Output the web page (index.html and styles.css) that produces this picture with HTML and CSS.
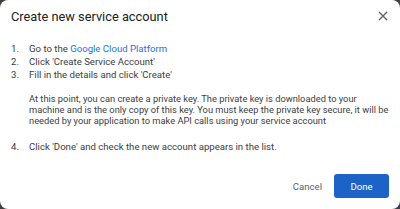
FILE: index.html
```html
<!DOCTYPE html>
<html>
<head>
<meta charset="utf-8">
<link rel="stylesheet" href="styles.css">
</head>
<body>
<div class="dialog">
  <div class="header">
    <h1 class="title">Create new service account</h1>
    <button class="close" aria-label="Close">
      <svg width="10" height="10" viewBox="0 0 10 10"><path d="M1 1 L9 9 M9 1 L1 9" stroke="#5f6368" stroke-width="1.4" fill="none"/></svg>
    </button>
  </div>
  <div class="content">
    <div class="step"><span class="num">1.</span><span class="text">Go to the <a class="link" href="#">Google Cloud Platform</a></span></div>
    <div class="step"><span class="num">2.</span><span class="text">Click 'Create Service Account'</span></div>
    <div class="step"><span class="num">3.</span><span class="text">Fill in the details and click 'Create'</span></div>
    <p class="note">At this point, you can create a private key. The private key is downloaded to your machine and is the only copy of this key. You must keep the private key secure, it will be needed by your application to make API calls using your service account</p>
    <div class="step"><span class="num">4.</span><span class="text">Click 'Done' and check the new account appears in the list.</span></div>
  </div>
  <div class="actions">
    <button class="btn-text">Cancel</button>
    <button class="btn-primary">Done</button>
  </div>
</div>
</body>
</html>
```
FILE: styles.css
```css
html, body {
  margin: 0;
  padding: 0;
  background: #3f3f3f;
}
.dialog {
  width: 400px;
  height: 209px;
  background: #ffffff;
  border-radius: 8px;
  display: flex;
  flex-direction: column;
  font-family: Roboto, "Liberation Sans", sans-serif;
  color: #3c4043;
  box-sizing: border-box;
}
.header {
  display: flex;
  justify-content: space-between;
  align-items: center;
  padding: 6px 12px 0 11px;
  height: 20px;
}
.title {
  margin: 0;
  font-family: Roboto, "Liberation Sans", sans-serif;
  font-weight: 400;
  font-size: 12.8px;
  color: #202124;
}
.close {
  border: 0;
  background: none;
  padding: 0;
  width: 10px;
  height: 10px;
  display: flex;
}
.content {
  padding: 16px 11px 0 11px;
  font-size: 9.6px;
}
.step {
  display: flex;
  line-height: 13px;
}
.num {
  width: 18px;
  flex: none;
  color: #3c4043;
}
.link {
  color: #1a73e8;
  text-decoration: none;
}
.note {
  margin: 12px 0 14px 18px;
  line-height: 11px;
  font-size: 9.3px;
}
.actions {
  display: flex;
  justify-content: flex-end;
  align-items: center;
  gap: 12px;
  padding: 21px 11px 0 0;
}
.btn-text {
  border: 0;
  background: none;
  font-family: Roboto, sans-serif;
  font-size: 9.6px;
  color: #5f6368;
  padding: 0;
}
.btn-primary {
  width: 55px;
  height: 24px;
  border: 0;
  border-radius: 3px;
  background: #1b63c6;
  color: #ffffff;
  font-family: Roboto, sans-serif;
  font-size: 9.6px;
  padding: 0;
}
```
